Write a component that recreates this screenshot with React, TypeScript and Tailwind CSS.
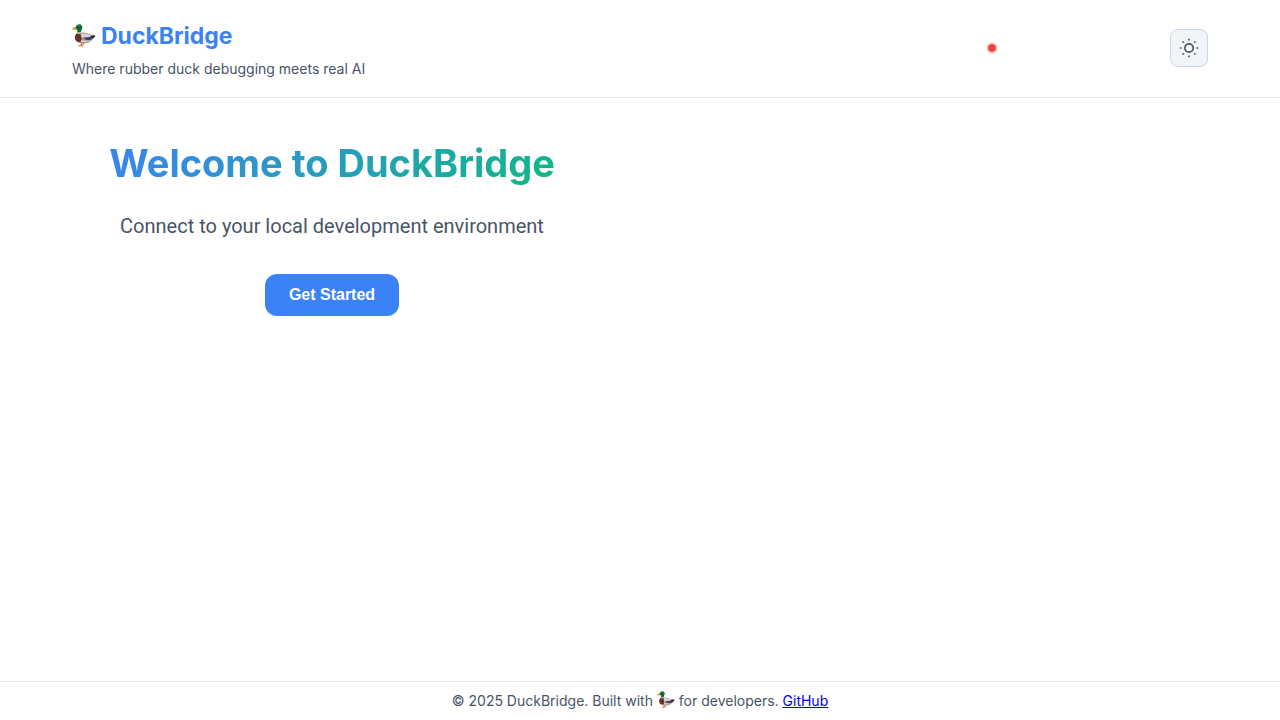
type DuckProps = { className: string };

function Duck({ className }: DuckProps) {
  return (
    <svg viewBox="0 0 24 24" className={className} role="img" aria-label="duck">
      <path d="M9.4 18l.2 3.200M12.600 18l-1.600 2.600" stroke="#d9773a" strokeWidth="1.300" fill="none" />
      <path d="M5.800 22.400c1.200-1.400 2.600-2 4.200-1.900l2.200.4-1.500.9-1 1-1.600-.5z" fill="#ee8048" />
      <path d="M5 9.800c-2.200 2.200-2.500 5-.9 6.900 2.200 2.500 6.200 3.200 10.200 2.400 3.600-.8 6.100-2.700 7.600-5.300l1.400-2.400-3.300-.4c-3-.9-6.200-2.400-9.700-2.400z" fill="#a48f8c" />
      <path d="M8.700 9.700c4-.8 7.800.5 11 2l-2.500 2.600c-3 .8-6.800.6-8.500-1z" fill="#ded2ce" />
      <path d="M8.700 15.300c3 1.800 7.500 1.700 10.500.2-2 1.700-5.200 2.700-8.600 2.600l-2-.5z" fill="#dccdc8" />
      <path d="M4.900 9.100c-2.100 2.200-2.600 5-1.200 7.100 1.100 1.500 3 2 4.500 1.900 1.300-1.400 1.800-3.600 1.200-5.200-.5-1.500-.9-2.500-.8-3.900z" fill="#673328" />
      <path d="M11 12.900c3 1 6 .6 8.900-1.100l3.300-.3c-.8 2.200-3.100 4-6.100 4.400-3 .2-5.100-.8-6.100-3z" fill="#51434a" />
      <path d="M14 13.600c1.500.6 3.400.5 5-.3l.3 1.600c-1.600.9-3.700.8-5.300 0z" fill="#2436a5" />
      <path d="M19 11.900l4.300-.4-1.500 2.300c-1.400.5-2.300.2-2.800-1.900z" fill="#25202b" />
      <path d="M0 5.200C.8 3.700 2.300 2.700 4.100 2.700l.7 2.700c-1.500.9-3.400.8-4.800-.2z" fill="#d9a63c" />
      <path d="M3.700 3.400C4.300 1.200 5.700.1 7.300.2c2 .1 3.300 1.700 3 3.700-.2 1.500-1.400 2.700-1.500 4.700l-3.800-.1c.8-1.600.3-2.500-.4-3.300z" fill="#0f6a39" />
      <path d="M5.600 1.800c1-.8 2.500-.8 3.300.1-.8 1.300-2.200 1.500-3.300-.1z" fill="#1f8c4d" />
      <path d="M4.800 8.400c1.200.6 2.700.7 3.900.2v.8c-1.400.6-2.900.4-4.200-.1z" fill="#f4eeea" />
      <circle cx="5.700" cy="3.300" r=".55" fill="#101712" />
    </svg>
  );
}

function SunIcon() {
  return (
    <svg viewBox="0 0 24 24" className="size-5" fill="none" stroke="currentColor" strokeWidth="2" aria-hidden="true">
      <circle cx="12" cy="12" r="5" />
      <path d="M12 1v2M12 21v2M4.220 4.220l1.420 1.420M18.360 18.360l1.420 1.420M1 12h2M21 12h2M4.220 19.780l1.420-1.420M18.360 5.640l1.420-1.420" />
    </svg>
  );
}

export default function App() {
  return (
    <div className="flex min-h-screen flex-col bg-white font-['Inter',sans-serif] text-[#475569]">
      <header className="border-b border-[#e2e8f0] pt-4 pb-[17px]">
        <div className="mx-auto flex max-w-[1200px] items-center justify-between px-8">
          <div>
            <h1 className="flex items-center gap-[5px] text-[23px] leading-10 font-bold text-[#3b82f6]">
              <Duck className="size-6" />
              DuckBridge
            </h1>
            <p className="mt-0.5 text-[14px] leading-[22px]">Where rubber duck debugging meets real AI</p>
          </div>
          <div className="flex w-55 items-center justify-between">
            <span role="status" aria-label="Disconnected" className="size-2 rounded-full bg-[#ef4444] ring-2 ring-[#ef4444]/20" />
            <button
              type="button"
              aria-label="Toggle theme"
              className="flex size-[38px] items-center justify-center rounded-lg border border-[#cbd5e1] bg-[#f1f5f9] text-[#475569]"
            >
              <SunIcon />
            </button>
          </div>
        </div>
      </header>

      <main className="mx-auto w-full max-w-[1200px] flex-1 px-8 py-8">
        <section className="flex w-full max-w-[520px] flex-col items-center text-center">
          <h2 className="bg-[linear-gradient(135deg,#3b82f6,#10b981)] bg-clip-text text-[38px] leading-[66px] font-bold text-transparent">
            Welcome to DuckBridge
          </h2>
          <p className="mt-3.5 font-['Roboto',sans-serif] text-[20px] leading-8">Connect to your local development environment</p>
          <button
            type="button"
            className="mt-8 rounded-xl bg-[#3b82f6] px-6 py-3 font-['Liberation_Sans',Arial,sans-serif] text-[16px] leading-[18px] font-bold text-white"
          >
            Get Started
          </button>
        </section>
      </main>

      <footer className="border-t border-[#e2e8f0] px-8 py-2 text-center text-[14px] leading-[22px]">
        <p>
          © 2025 DuckBridge. Built with <Duck className="inline size-[18px] align-[-3px]" /> for developers.{" "}
          <a href="https://github.com" className="text-[#0000ee] underline">
            GitHub
          </a>
        </p>
      </footer>
    </div>
  );
}
